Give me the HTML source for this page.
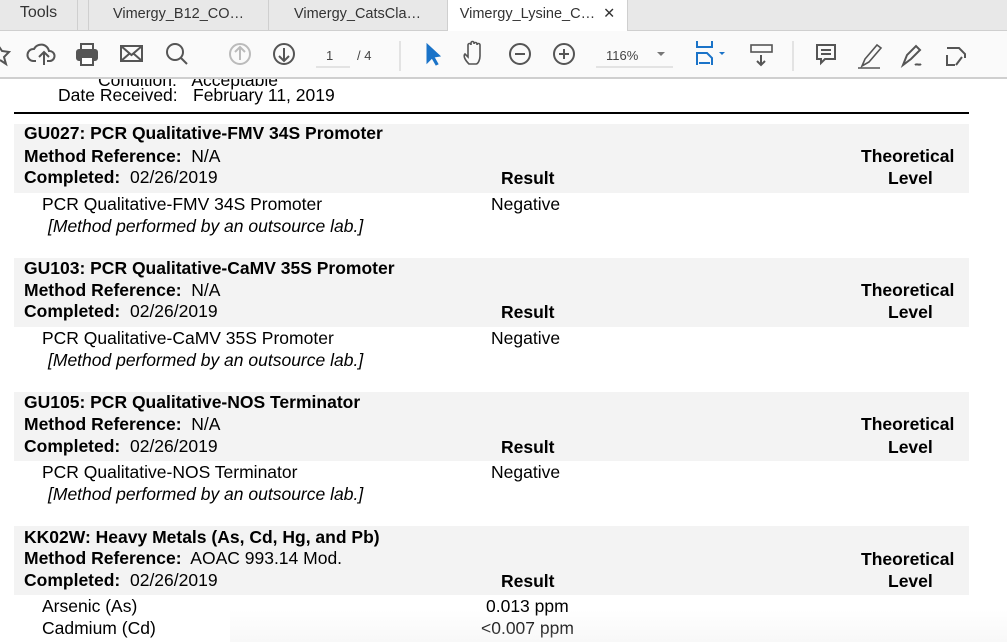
<!DOCTYPE html>
<html><head><style>
body{margin:0;width:1007px;height:642px;overflow:hidden;background:#fff;font-family:"Liberation Sans",Arial,sans-serif;position:relative}
.tabs{position:absolute;left:0;top:0;width:1007px;height:30px;background:#e8e8e8;border-bottom:1px solid #cfcfcf}
.tab{position:absolute;top:0;height:30px;line-height:28px;font-size:14.5px;color:#333;text-align:center;border-right:1px solid #cfcfcf}
.tb{position:absolute;left:0;top:31px;width:1007px;height:46px;background:#fafafa;border-bottom:1px solid #cfcfcf}
.a{position:absolute;font-size:17.5px;color:#000;white-space:nowrap;margin-top:-1px}
.b{font-weight:bold}
.g{position:absolute;left:14px;width:955px;height:69px;background:#f3f3f3}
</style></head><body>
<div class="tabs">
<div class="tab" style="left:0;width:77px;font-size:16px;line-height:26px">Tools</div>
<div class="tab" style="left:88px;width:179px;border-left:1px solid #cfcfcf">Vimergy_B12_CO…</div>
<div class="tab" style="left:268px;width:179px">Vimergy_CatsCla…</div>
<div class="tab" style="left:448px;width:179px;background:#fff;height:31px">Vimergy_Lysine_C… <span style="margin-left:4px">✕</span></div>
</div>
<div class="tb">
<svg width="1007" height="46" style="position:absolute;left:0;top:0" fill="none" stroke="#555" stroke-width="2">
<path d="M-2 14 L2 20 L9 21 L4 26 L6 33 L0 29" />
<path d="M36 30 h-3 a6 6 0 0 1 1-12 a8 8 0 0 1 15 2 a5 5 0 0 1 1 10 h-3 M44 34 v-12 M39 26 l5-5 5 5"/>
<rect x="77" y="19" width="20" height="10" rx="2" fill="#555"/><rect x="81" y="13" width="12" height="6"/><rect x="81" y="26" width="12" height="8" fill="#fff"/>
<rect x="121" y="15" width="21" height="15"/><path d="M121 15 l10.5 9 10.5-9 M121 30 l8-7 M142 30 l-8-7"/>
<circle cx="175" cy="21" r="8"/><path d="M181 27 l6 6"/>
<circle cx="240" cy="23" r="10" stroke="#bbb"/><path d="M240 29 v-12 M235 21 l5-5 5 5" stroke="#bbb"/>
<circle cx="284" cy="23" r="10"/><path d="M284 17 v12 M279 25 l5 5 5-5"/>
<path d="M316 36 h34" stroke="#ccc" stroke-width="1"/>
<path d="M400 10 v30" stroke="#ccc" stroke-width="1"/>
<path d="M427 13 l0 19 5-5 4 7 2-1-4-7 6-1z" fill="#1a73c8" stroke="#1a73c8" stroke-width="1"/>
<path d="M469 33 c-4-4-6-8-4-10 l3 3 v-12 a1.5 1.5 0 0 1 3 0 v-2 a1.5 1.5 0 0 1 3 0 v1 a1.5 1.5 0 0 1 3 0 v1 a1.5 1.5 0 0 1 3 0 v11 c0 4-2 8-4 8z" stroke-width="1.6"/>
<circle cx="520" cy="23" r="10"/><path d="M515 23 h10"/>
<circle cx="564" cy="23" r="10"/><path d="M559 23 h10 M564 18 v10"/>
<path d="M596 36 h77" stroke="#ccc" stroke-width="1"/>
<path d="M657 21 l4 4 4-4z" fill="#777" stroke="none"/>
<path d="M697 10 v6 h15 v-6 M697 34 v-12 h10 l5 5 v7 M699 32 h11" stroke="#1a73c8"/>
<path d="M719 21 l3 3 3-3z" fill="#1a73c8" stroke="none"/>
<rect x="751" y="14" width="21" height="7" stroke-width="1.6"/><path d="M761 24 v10 M757 30 l4 4 4-4"/>
<path d="M793 10 v30" stroke="#ccc" stroke-width="1"/>
<path d="M817 14 h18 v14 h-10 l-4 4 v-4 h-4z M821 19 h10 M821 23 h10"/>
<path d="M862 35 l3-7 12-14 4 3-12 14z M858 37 h22" stroke-width="1.6"/>
<path d="M903 34 l4-10 9-9 4 4-9 9z M915 34 c2-2 4 1 6-1"/>
<path d="M947 17 h12 l6 6 v4 M947 24 v10 h8 M962 26 l-6 8"/>
</svg>
<div class="a" style="left:326px;top:18px;font-size:13px;color:#444">1</div>
<div class="a" style="left:357px;top:18px;font-size:13px;color:#444">/ 4</div>
<div class="a" style="left:606px;top:18px;font-size:13px;color:#444">116%</div>
</div>

<div class="a" style="left:98px;top:71px;clip-path:inset(8px 0 0 0)">Condition:&nbsp;&nbsp;&nbsp;Acceptable</div>
<div style="position:absolute;left:0;top:78px;width:1007px;height:1px;background:#cfcfcf"></div>
<div class="a" style="left:58px;top:86px">Date Received:</div>
<div class="a" style="left:193px;top:86px">February 11, 2019</div>
<div style="position:absolute;left:14px;top:112px;width:955px;height:2px;background:#000"></div>

<div class="g" style="top:124px"></div>
<div class="g" style="top:258px"></div>
<div class="g" style="top:392px"></div>
<div class="g" style="top:526px"></div>

<div class="a b" style="left:24px;top:124px">GU027: PCR Qualitative-FMV 34S Promoter</div>
<div class="a" style="left:24px;top:147px"><b>Method Reference:</b>&nbsp; N/A</div>
<div class="a" style="left:24px;top:168px"><b>Completed:</b>&nbsp; 02/26/2019</div>
<div class="a b" style="left:501px;top:169px">Result</div>
<div class="a b" style="left:861px;top:147px">Theoretical</div>
<div class="a b" style="left:888px;top:169px">Level</div>
<div class="a" style="left:42px;top:195px">PCR Qualitative-FMV 34S Promoter</div>
<div class="a" style="left:491px;top:195px">Negative</div>
<div class="a" style="left:48px;top:217px;font-style:italic">[Method performed by an outsource lab.]</div>

<div class="a b" style="left:24px;top:259px">GU103: PCR Qualitative-CaMV 35S Promoter</div>
<div class="a" style="left:24px;top:281px"><b>Method Reference:</b>&nbsp; N/A</div>
<div class="a" style="left:24px;top:302px"><b>Completed:</b>&nbsp; 02/26/2019</div>
<div class="a b" style="left:501px;top:303px">Result</div>
<div class="a b" style="left:861px;top:281px">Theoretical</div>
<div class="a b" style="left:888px;top:303px">Level</div>
<div class="a" style="left:42px;top:329px">PCR Qualitative-CaMV 35S Promoter</div>
<div class="a" style="left:491px;top:329px">Negative</div>
<div class="a" style="left:48px;top:351px;font-style:italic">[Method performed by an outsource lab.]</div>

<div class="a b" style="left:24px;top:393px">GU105: PCR Qualitative-NOS Terminator</div>
<div class="a" style="left:24px;top:415px"><b>Method Reference:</b>&nbsp; N/A</div>
<div class="a" style="left:24px;top:437px"><b>Completed:</b>&nbsp; 02/26/2019</div>
<div class="a b" style="left:501px;top:438px">Result</div>
<div class="a b" style="left:861px;top:415px">Theoretical</div>
<div class="a b" style="left:888px;top:438px">Level</div>
<div class="a" style="left:42px;top:463px">PCR Qualitative-NOS Terminator</div>
<div class="a" style="left:491px;top:463px">Negative</div>
<div class="a" style="left:48px;top:485px;font-style:italic">[Method performed by an outsource lab.]</div>

<div class="a b" style="left:24px;top:528px">KK02W: Heavy Metals (As, Cd, Hg, and Pb)</div>
<div class="a" style="left:24px;top:549px"><b>Method Reference:</b>&nbsp; AOAC 993.14 Mod.</div>
<div class="a" style="left:24px;top:571px"><b>Completed:</b>&nbsp; 02/26/2019</div>
<div class="a b" style="left:501px;top:572px">Result</div>
<div class="a b" style="left:861px;top:550px">Theoretical</div>
<div class="a b" style="left:888px;top:572px">Level</div>
<div class="a" style="left:42px;top:597px">Arsenic (As)</div>
<div class="a" style="left:486px;top:597px">0.013 ppm</div>
<div class="a" style="left:42px;top:619px">Cadmium (Cd)</div>
<div class="a" style="left:481px;top:619px">&lt;0.007 ppm</div>
<div style="position:absolute;left:230px;top:610px;width:777px;height:32px;background:linear-gradient(to bottom,rgba(255,255,255,0),rgba(235,235,235,0.35))"></div>
</body></html>
